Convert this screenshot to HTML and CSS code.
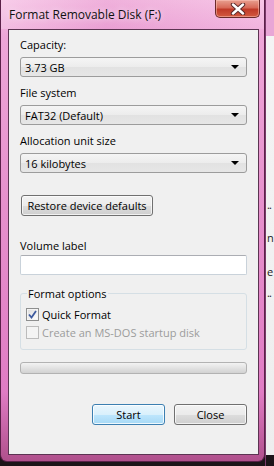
FILE: index.html
```html
<!DOCTYPE html>
<html lang="en">

<head>
    <meta charset="UTF-8">
    <meta name="viewport" content="width=device-width, initial-scale=1.0">
    <title>Format Removable Disk (F:)</title>

    <link rel="stylesheet" href="styles.css">
</head>

<body>
    <div class="desktop">
        <div class="window">
            <div class="titlebar">
                <span class="title">Format Removable Disk (F:)</span>
                <div class="close-btn">
                    <svg width="16" height="12" viewBox="0 0 16 12">
                        <path d="M3 1.5 L13 10.5 M13 1.5 L3 10.5" stroke="#5a2a2a" stroke-width="4.4" stroke-linecap="round" fill="none" />
                        <path d="M3 1.5 L13 10.5 M13 1.5 L3 10.5" stroke="#ffffff" stroke-width="2.4" stroke-linecap="round" fill="none" />
                    </svg>
                </div>
            </div>

            <div class="client">
                <div class="field-label">Capacity:</div>
                <div class="combo">
                    <span>3.73 GB</span>
                    <span class="arrow"></span>
                </div>

                <div class="field-label mt">File system</div>
                <div class="combo">
                    <span>FAT32 (Default)</span>
                    <span class="arrow"></span>
                </div>

                <div class="field-label mt">Allocation unit size</div>
                <div class="combo">
                    <span>16 kilobytes</span>
                    <span class="arrow"></span>
                </div>

                <div class="btn restore">Restore device defaults</div>

                <div class="field-label vol">Volume label</div>
                <div class="textbox"></div>

                <fieldset class="group">
                    <legend>Format options</legend>
                    <div class="check-row">
                        <span class="checkbox checked">
                            <svg width="9" height="9" viewBox="0 0 9 9">
                                <path d="M1 4.5 L3.5 7.5 L8 1" stroke="#3d5a9e" stroke-width="1.8" fill="none" />
                            </svg>
                        </span>
                        <span>Quick Format</span>
                    </div>
                    <div class="check-row disabled">
                        <span class="checkbox"></span>
                        <span>Create an MS-DOS startup disk</span>
                    </div>
                </fieldset>

                <div class="progress"></div>

                <div class="actions">
                    <div class="btn primary">Start</div>
                    <div class="btn">Close</div>
                </div>
            </div>
        </div>

        <div class="behind">
            <span class="frag f1">..</span>
            <span class="frag f2">n</span>
            <span class="frag f3">e</span>
            <span class="frag f4">..</span>
        </div>
    </div>
</body>

</html>
```

FILE: styles.css
```css
* {
    box-sizing: border-box;
    padding: 0;
    margin: 0;
}

body {
    background-color: #1c1418;
    font-family: "Open Sans", "Noto Sans", sans-serif;
    font-size: 11px;
    color: #000;
}

.desktop {
    display: flex;
    width: 274px;
    height: 466px;
    overflow: hidden;
}

.window {
    width: 265px;
    height: 462px;
    flex-shrink: 0;
    padding: 0 5px 6px 7px;
    display: flex;
    flex-direction: column;
    border: 1px solid #5a2048;
    border-top: none;
    border-radius: 0 0 7px 7px;
    background: linear-gradient(180deg, #f6c0e4 0%, #eea6d8 8%, #e690cc 45%, #e07cc4 85%, #b0508c 100%);
}

.titlebar {
    height: 29px;
    display: flex;
    justify-content: space-between;
    align-items: flex-start;
    background: linear-gradient(90deg, rgba(255, 255, 255, 0.2), rgba(200, 90, 170, 0.15) 40%, rgba(255, 255, 255, 0.1));
    margin: 0 -5px 0 -7px;
    padding: 0 4px 0 8px;
}

.title {
    margin-top: 6px;
    font-size: 12px;
    color: #111;
    text-shadow: 0 0 6px rgba(255, 255, 255, 0.9);
}

.close-btn {
    width: 45px;
    height: 18px;
    display: flex;
    justify-content: center;
    align-items: center;
    border: 1px solid #6a2a2a;
    border-top: none;
    border-radius: 0 0 5px 5px;
    background: linear-gradient(180deg, #e8a090 0%, #d86a58 45%, #c03a28 55%, #d25a40 100%);
    box-shadow: inset 0 0 0 1px rgba(255, 200, 190, 0.5);
}

.client {
    flex: 1;
    display: flex;
    flex-direction: column;
    background-color: #f0f0f0;
    border: 1px solid #5c3452;
    padding: 7px 11px 0 11px;
}

.field-label {
    line-height: 16px;
    height: 16px;
    margin-bottom: 4px;
}

.mt {
    margin-top: 8px;
}

.combo {
    height: 20px;
    display: flex;
    justify-content: space-between;
    align-items: center;
    padding: 0 7px 0 4px;
    border: 1px solid #9c9c9c;
    border-radius: 3px;
    background: linear-gradient(180deg, #f5f5f5 0%, #ececec 50%, #e2e2e2 51%, #e6e6e6 100%);
}

.arrow {
    width: 0;
    height: 0;
    border-left: 4px solid transparent;
    border-right: 4px solid transparent;
    border-top: 4px solid #000;
}

.btn {
    height: 21px;
    display: flex;
    justify-content: center;
    align-items: center;
    border: 1px solid #707070;
    border-radius: 3px;
    background: linear-gradient(180deg, #f2f2f2 0%, #ebebeb 50%, #dddddd 51%, #cfcfcf 100%);
    box-shadow: inset 0 0 0 1px rgba(255, 255, 255, 0.7);
}

.restore {
    width: 132px;
    margin: 22px 0 0 1px;
}

.vol {
    margin-top: 22px;
    margin-bottom: 1px;
}

.textbox {
    height: 20px;
    background-color: #fff;
    border: 1px solid #c9d2da;
    border-top-color: #abadb3;
    border-radius: 2px;
}

.group {
    margin-top: 11px;
    height: 64px;
    border: 1px solid #d5dfe5;
    border-radius: 3px;
    padding: 4px 6px 0 5px;
}

.group legend {
    padding: 0 1px;
    margin-left: 1px;
    line-height: 15px;
}

.check-row {
    display: flex;
    align-items: center;
    gap: 3px;
    height: 18px;
}

.checkbox {
    width: 13px;
    height: 13px;
    display: flex;
    justify-content: center;
    align-items: center;
    border: 1px solid #8e8f8f;
    background: linear-gradient(135deg, #dcdcdc, #ffffff);
    box-shadow: inset 0 0 0 1px #f4f4f4;
}

.disabled {
    color: #9c9c9c;
}

.disabled .checkbox {
    border-color: #bcbcbc;
    background: #f4f4f4;
}

.progress {
    margin-top: 12px;
    height: 12px;
    border: 1px solid #b2b2b2;
    border-radius: 3px;
    background: linear-gradient(180deg, #f3f3f3 0%, #e2e2e2 50%, #d2d2d2 100%);
}

.actions {
    margin-top: 30px;
    display: flex;
    justify-content: flex-end;
    gap: 9px;
}

.actions .btn {
    width: 73px;
}

.primary {
    border-color: #3c7fb1;
    background: linear-gradient(180deg, #eaf6fd 0%, #d9f0fc 50%, #bee6fd 51%, #a7d9f5 100%);
    box-shadow: inset 0 0 0 1px rgba(255, 255, 255, 0.8);
}

.behind {
    flex: 1;
    position: relative;
    background: linear-gradient(180deg, #e8a6d6 0, #e8a6d6 36px, #f4f4f4 36px, #eeeeee 455px, #1c1418 455px);
    border-left: 1px solid #7a3a6a;
}

.frag {
    position: absolute;
    left: 1px;
    font-size: 11px;
    color: #222;
}

.f1 {
    top: 197px;
    letter-spacing: -1px;
}

.f2 {
    top: 230px;
}

.f3 {
    top: 264px;
}

.f4 {
    top: 285px;
    letter-spacing: -1px;
}
```
